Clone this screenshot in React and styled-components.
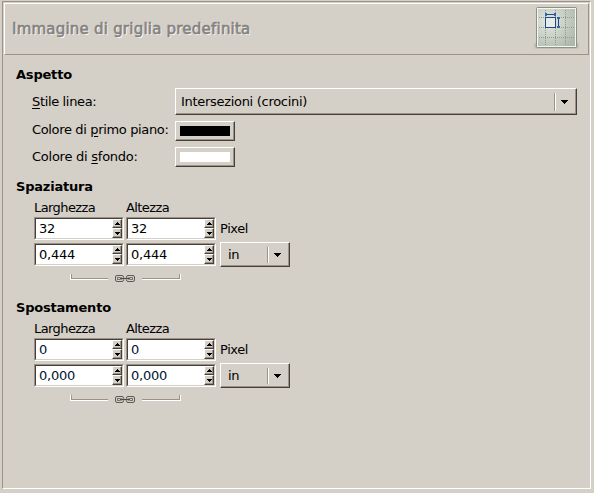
import React from "react";
import styled, { createGlobalStyle } from "styled-components";

const Global = createGlobalStyle`
  * { box-sizing: border-box; }
  html, body { margin: 0; background: #d4cfc7; overflow: hidden; }
  body { font: 13px/16px "DejaVu Sans", sans-serif; color: #000; }
`;
const Frame = styled.main`
  width: 589px; height: 488px; margin: 1px 0 0 2px; padding: 1px;
  border: 1px solid; border-color: #9c9384 #fff #fff #9c9384;
`;
const Header = styled.header`
  display: flex; justify-content: space-between; width: 585px; height: 52px;
  padding: 0 8px 0 7px; border: 1px solid; border-color: #fff #9c9384 #9c9384 #fff;
`;
const Title = styled.h1`
  margin: 16px 0 0; font-size: 15px; line-height: 18px; font-weight: 400;
  color: #858280; text-shadow: 1px 1px 0 #fff; white-space: nowrap;
  letter-spacing: 0.22px; -webkit-text-stroke: 0.6px #858280;
`;
const Section = styled.section`
  height: 121px; padding: 0 0 0 12px;
  &:first-of-type { height: 112px; margin-top: 12px; }
`;
const Heading = styled.h2`
  margin: 0; font-size: 13px; line-height: 16px; font-weight: 700;
  letter-spacing: -0.2px;
`;
const Row = styled.div`
  display: grid; grid-template-columns: 143px auto; justify-content: start; align-items: center;
  height: ${(p) => p.$height}px; margin: ${(p) => p.$top}px 0 0 16px;
`;
const Label = styled.span`
  white-space: nowrap; letter-spacing: ${(p) => p.$spacing ?? -0.2}px;
  padding-bottom: ${(p) => p.$lift || 0}px;
  u { text-underline-offset: 2px; text-decoration-thickness: 1px; }
`;
const ColumnLabel = styled(Label)`align-self: start; letter-spacing: -0.58px;`;
const Raised = styled.button`
  display: flex; align-items: center; padding: 0; font: inherit; color: inherit;
  background: #d4cfc7; border: 1px solid; border-color: #fff #443f3a #443f3a #fff;
  box-shadow: inset -1px -1px #9c9384;
`;
const Combo = styled(Raised)`
  width: ${(p) => p.$width}px; height: ${(p) => p.$height}px; padding-left: ${(p) => p.$pad}px;
  letter-spacing: -0.3px;
`;
const ComboText = styled.span`flex: 1; text-align: left;`;
const ComboArrow = styled.span`
  display: flex; align-items: center; width: 22px; height: ${(p) => p.$height}px; padding-left: 6px;
  border-left: 1px solid #9c9384; box-shadow: inset 1px 0 #fff;
`;
const ColorButton = styled(Raised)`width: 60px; height: 20px; padding: 0 4px;`;
const Swatch = styled.span`width: 50px; height: 10px; background: ${(p) => p.$color};`;
const SizeGrid = styled.div`
  display: grid; grid-template-columns: 90px 90px 72px; column-gap: 2px;
  grid-template-rows: 15px 23px 25px; row-gap: 2px; margin: 5px 0 0 18px;
  align-items: center;
`;
const UnitCell = styled.div`padding-left: 2px;`;
const Spin = styled.div`
  display: flex; width: 90px; height: 23px; border: 1px solid; border-color: #9c9384 #fff #fff #9c9384;
`;
const SpinInner = styled.div`
  display: flex; flex: 1; background: #fff; border: 1px solid; border-color: #443f3a #d4cfc7 #d4cfc7 #443f3a;
`;
const Value = styled.span`
  flex: 1; padding: 2px 0 0 3px; letter-spacing: -0.25px; color: ${(p) => (p.$muted ? "#001430" : "#000")};
`;
const Steppers = styled.span`display: flex; flex-direction: column; width: 10px; height: 19px;`;
const Step = styled(Raised)`
  width: 10px; height: ${(p) => p.$height}px; justify-content: center;
`;
const Link = styled.div`
  display: grid; grid-template-columns: 38px 20px 39px; column-gap: 7px;
  margin: 7px 0 0 54px; height: 9px; align-items: start;
`;
const Bracket = styled.span`
  display: block; height: 6px; border-bottom: 1px solid #fff; position: relative;
  &::before {
    content: ""; position: absolute; top: 0; bottom: 0; width: 2px;
    ${(p) => (p.$right ? "right: 0; background: linear-gradient(90deg, #9c9384 50%, #fff 50%);" : "left: 0; background: linear-gradient(90deg, #fff 50%, #9c9384 50%);")}
  }
  &::after {
    content: ""; position: absolute; bottom: 0; height: 1px; background: #9c9384;
    left: ${(p) => (p.$right ? 0 : 1)}px; right: ${(p) => (p.$right ? 1 : 0)}px;
  }
`;
const Chain = () => (
  <svg width="20" height="9" viewBox="0 0 20 9" fill="none">
    <rect x="0.5" y="1.5" width="8" height="6" rx="1.5" stroke="#5c5b57" />
    <rect x="11.5" y="1.5" width="8" height="6" rx="1.5" stroke="#5c5b57" />
    <rect x="2.5" y="3.5" width="4" height="2" stroke="#77756f" />
    <rect x="13.5" y="3.5" width="4" height="2" stroke="#77756f" />
    <path d="M5 3.5h10v2H5z" fill="#b0ada6" />
    <path d="M5 4.5h10" stroke="#4d4c48" />
  </svg>
);
const Down = () => (
  <svg width="7" height="4" viewBox="0 0 7 4" shapeRendering="crispEdges"><path d="M0 0h7v1H6v1H5v1H4v1H3V3H2V2H1V1H0z" /></svg>
);
const StepArrow = ({ up }) => (
  <svg width="5" height="3" viewBox="0 0 5 3" shapeRendering="crispEdges">
    <path d={up ? "M2 0h1v1h1v1h1v1H0V2h1V1h1z" : "M0 0h5v1H4v1H3v1H2V2H1V1H0z"} />
  </svg>
);
const GridIcon = () => (
  <svg width="48" height="48" viewBox="0 0 48 48">
    <defs>
      <radialGradient id="tile" cx="0.3" cy="0.35" r="0.85">
        <stop offset="0" stopColor="#e4e9e2" /><stop offset="1" stopColor="#acb4a6" />
      </radialGradient>
      <filter id="soft"><feGaussianBlur stdDeviation="1.2" /></filter>
    </defs>
    <rect x="3" y="39" width="43" height="5" rx="2" fill="#77776f" opacity=".55" filter="url(#soft)" />
    <rect x="4.5" y="3.5" width="40" height="40" rx="1" fill="url(#tile)" stroke="#8b9187" />
    <rect x="5.5" y="4.5" width="38" height="38" fill="none" stroke="#f4f6f2" />
    <path d="M13.5 6v36M23.5 6v36M33.5 6v36M7 13.5h36M7 23.5h36M7 33.5h36" stroke="#929b8e" strokeDasharray="1 1" />
    <rect x="13.5" y="13.5" width="10" height="10" fill="#e8ece9" stroke="#204a87" />
    <path d="M14 10.5h9M26.5 14v9" stroke="#204a87" />
    <path d="M13 9h2v3h-2zM22 9h2v3h-2zM25 13h3v2h-3zM25 22h3v2h-3z" fill="#3465a4" />
  </svg>
);
const SpinBox = ({ value, muted }) => (
  <Spin><SpinInner><Value $muted={muted}>{value}</Value>
    <Steppers><Step $height={9}><StepArrow up /></Step><Step $height={10}><StepArrow /></Step></Steppers>
  </SpinInner></Spin>
);
const SizeSection = ({ title, px, unit, muted }) => (
  <Section>
    <Heading>{title}</Heading>
    <SizeGrid>
      <ColumnLabel>Larghezza</ColumnLabel><ColumnLabel>Altezza</ColumnLabel><span />
      <SpinBox value={px} muted={muted} /><SpinBox value={px} muted={muted} /><UnitCell><Label $spacing={-0.4}>Pixel</Label></UnitCell>
      <SpinBox value={unit} muted={muted} /><SpinBox value={unit} muted={muted} />
      <UnitCell><Combo $width={70} $height={25} $pad={7}><ComboText>in</ComboText><ComboArrow $height={16}><Down /></ComboArrow></Combo></UnitCell>
    </SizeGrid>
    <Link><Bracket /><Chain /><Bracket $right /></Link>
  </Section>
);

export default function App() {
  return (
    <>
      <Global />
      <Frame>
        <Header><Title>Immagine di griglia predefinita</Title><GridIcon /></Header>
        <Section>
          <Heading>Aspetto</Heading>
          <Row $height={27} $top={5}>
            <Label $spacing={-0.35}><u>S</u>tile linea:</Label>
            <Combo $width={402} $height={27} $pad={5}>
              <ComboText>Intersezioni (crocini)</ComboText><ComboArrow $height={18}><Down /></ComboArrow>
            </Combo>
          </Row>
          <Row $height={20} $top={6}>
            <Label $spacing={-0.35} $lift={2}>Colore di <u>p</u>rimo piano:</Label><ColorButton><Swatch $color="#000" /></ColorButton>
          </Row>
          <Row $height={20} $top={6}>
            <Label $spacing={-0.25}>Colore di <u>s</u>fondo:</Label><ColorButton><Swatch $color="#fff" /></ColorButton>
          </Row>
        </Section>
        <SizeSection title="Spaziatura" px="32" unit="0,444" />
        <SizeSection title="Spostamento" px="0" unit="0,000" muted />
      </Frame>
    </>
  );
}
